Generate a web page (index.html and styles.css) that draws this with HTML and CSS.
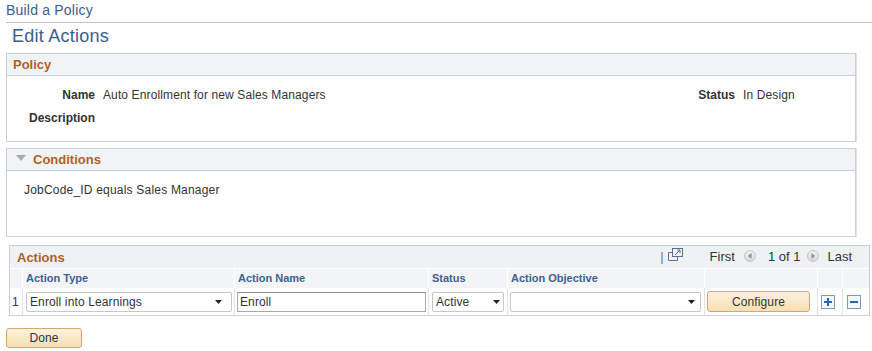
FILE: index.html
```html
<!DOCTYPE html>
<html lang="en">
<head>
<meta charset="utf-8">
<title>Edit Actions</title>
<link rel="stylesheet" href="styles.css">
</head>
<body>
<div class="crumb">Build a Policy</div>
<h1 class="title">Edit Actions</h1>

<section class="box">
  <div class="box-head">Policy</div>
  <div class="policy-body">
    <div class="lbl">Name</div>
    <div class="val">Auto Enrollment for new Sales Managers</div>
    <div class="lbl">Status</div>
    <div class="val">In Design</div>
    <div class="lbl">Description</div>
  </div>
</section>

<section class="box conditions">
  <div class="box-head">
    <svg class="tri" width="10" height="6" viewBox="0 0 10 6"><polygon points="0,0 10,0 5,6" fill="#ababab"/></svg>
    Conditions
  </div>
  <div class="cond-body">JobCode_ID equals Sales Manager</div>
</section>

<section class="grid">
  <div class="grid-head">
    <span class="grid-title">Actions</span>
    <div class="nav">
      <span class="sep">|</span>
      <svg class="popup" width="15" height="13" viewBox="0 0 15 13" fill="none" stroke="#5d7290" stroke-width="1">
        <rect x="4.5" y="0.5" width="10" height="8"/>
        <path d="M4.5 4.5H0.5V12.5H9.5V8.5"/>
        <path d="M7 7L12 2M9 2H12V5"/>
      </svg>
      <span class="nav-first">First</span>
      <svg class="circ prev" width="12" height="12" viewBox="0 0 12 12">
        <defs><linearGradient id="cg" x1="0" y1="0" x2="0" y2="1"><stop offset="0" stop-color="#f3f3f3"/><stop offset="1" stop-color="#d6d6d6"/></linearGradient></defs>
        <circle cx="6" cy="6" r="5.5" fill="url(#cg)" stroke="#c4c4c4"/>
        <polygon points="7.5,3 4,6 7.5,9" fill="#8e8e8e"/>
      </svg>
      <span class="nav-count">1 of 1</span>
      <svg class="circ next" width="12" height="12" viewBox="0 0 12 12">
        <circle cx="6" cy="6" r="5.5" fill="url(#cg)" stroke="#c4c4c4"/>
        <polygon points="4.5,3 8,6 4.5,9" fill="#8e8e8e"/>
      </svg>
      <span>Last</span>
    </div>
  </div>
  <div class="cols">
    <div class="hc"></div>
    <div class="hc">Action Type</div>
    <div class="hc">Action Name</div>
    <div class="hc">Status</div>
    <div class="hc">Action Objective</div>
    <div class="hc"></div>
    <div class="hc"></div>
    <div class="hc"></div>
  </div>
  <div class="data">
    <div class="dc num">1</div>
    <div class="dc c-type">
      <div class="select s-type"><span>Enroll into Learnings</span><svg class="caret" width="7" height="4" viewBox="0 0 7 4"><polygon points="0,0 7,0 3.5,4" fill="#222"/></svg></div>
    </div>
    <div class="dc c-name"><div class="input">Enroll</div></div>
    <div class="dc c-status">
      <div class="select s-status"><span>Active</span><svg class="caret" width="7" height="4" viewBox="0 0 7 4"><polygon points="0,0 7,0 3.5,4" fill="#222"/></svg></div>
    </div>
    <div class="dc c-obj">
      <div class="select s-obj"><span></span><svg class="caret" width="7" height="4" viewBox="0 0 7 4"><polygon points="0,0 7,0 3.5,4" fill="#222"/></svg></div>
    </div>
    <div class="dc c-cfg"><button class="btn cfg">Configure</button></div>
    <div class="dc c-add">
      <svg class="ibtn" width="14" height="14" viewBox="0 0 14 14"><rect x="0.5" y="0.5" width="13" height="13" fill="#f5f8fc" stroke="#7d9bc2"/><path d="M3 7H11M7 3V11" stroke="#2a66b3" stroke-width="2"/></svg>
    </div>
    <div class="dc c-del">
      <svg class="ibtn" width="14" height="14" viewBox="0 0 14 14"><rect x="0.5" y="0.5" width="13" height="13" fill="#f5f8fc" stroke="#7d9bc2"/><path d="M3 7H11" stroke="#2a66b3" stroke-width="2"/></svg>
    </div>
  </div>
</section>

<button class="btn done">Done</button>
</body>
</html>
```

FILE: styles.css
```css
body {
  margin: 0;
  font-family: "Liberation Sans", Arial, sans-serif;
  font-size: 12px;
  letter-spacing: 0.12px;
  color: #333;
  background: #fff;
}

.crumb {
  margin-left: 6px;
  padding: 2px 0 3px;
  font-size: 14px;
  line-height: 17px;
  letter-spacing: 0.2px;
  color: #3b5d8e;
  border-bottom: 1px solid #c2c2c2;
}

.title {
  margin: 2px 0 6px 12px;
  font-size: 18px;
  line-height: 22px;
  letter-spacing: 0.25px;
  font-weight: normal;
  color: #3b5d8e;
}

.box {
  margin-left: 6px;
  width: 850px;
  box-sizing: border-box;
  border: 1px solid #cbd0d5;
  box-shadow: 1px 0 0 #e2e5e8;
}

.conditions {
  margin-top: 6px;
}

.box-head {
  display: flex;
  align-items: center;
  height: 21px;
  line-height: 21px;
  padding-left: 6px;
  background: #f1f4f6;
  border-bottom: 1px solid #cbd0d5;
  font-size: 13px;
  font-weight: bold;
  letter-spacing: 0;
  color: #b45f1e;
}

.tri {
  margin: 0 7px 3px 3px;
}

.policy-body {
  display: grid;
  grid-template-columns: 96px 1fr auto 112px;
  row-gap: 7px;
  padding: 11px 0 15px;
  line-height: 16px;
}

.lbl {
  text-align: right;
  padding-right: 8px;
  font-weight: bold;
  letter-spacing: 0;
  color: #333;
}

.cond-body {
  height: 65px;
  box-sizing: border-box;
  padding: 11px 0 0 17px;
  line-height: 16px;
  letter-spacing: 0.2px;
}

.grid {
  margin: 8px 0 0 9px;
  width: 861px;
  box-sizing: border-box;
  border: 1px solid #cbd0d5;
}

.grid-head {
  display: flex;
  align-items: center;
  justify-content: space-between;
  height: 22px;
  padding-left: 7px;
  background: #eff2f4;
}

.grid-title {
  font-size: 13px;
  font-weight: bold;
  letter-spacing: 0;
  color: #b45f1e;
}

.nav {
  display: flex;
  align-items: center;
  padding-right: 17px;
  font-size: 13px;
  line-height: 22px;
  letter-spacing: 0;
  color: #333;
}

.sep {
  margin-right: 4px;
  color: #8d5c9f;
}

.popup {
  margin: 0 27px 5px 0;
}

.nav-first {
  margin-right: 9px;
}

.circ {
  margin-bottom: 3px;
}

.prev {
  margin-right: 12px;
}

.nav-count {
  margin-right: 7px;
}

.next {
  margin-right: 8px;
}

.cols,
.data {
  display: grid;
  grid-template-columns: 12px 212px 194px 79px 197px 113px 25px 27px;
}

.cols {
  height: 19px;
  border-top: 1px solid #fff;
  background: #f2f4f6;
}

.hc {
  box-sizing: border-box;
  padding-left: 3px;
  border-left: 1px solid #fff;
  font-size: 11px;
  font-weight: bold;
  letter-spacing: 0;
  line-height: 19px;
  color: #3f6190;
  white-space: nowrap;
  overflow: hidden;
}

.hc:first-child {
  border-left: 0;
}

.data {
  height: 27px;
  background: #fff;
}

.dc {
  display: flex;
  align-items: center;
  box-sizing: border-box;
  border-left: 1px solid #e0e3e6;
}

.dc.num {
  border-left: 0;
  padding-left: 2px;
}

.select {
  display: flex;
  align-items: center;
  justify-content: space-between;
  box-sizing: border-box;
  height: 20px;
  padding-left: 3px;
  border: 1px solid #c3c8cd;
  border-radius: 2px;
  background: #fff;
  color: #333;
}

.s-type {
  width: 206px;
  margin-left: 3px;
  padding-right: 9px;
}

.s-status {
  width: 72px;
  margin-left: 3px;
  padding-right: 3px;
}

.s-obj {
  width: 191px;
  margin-left: 2px;
  padding-right: 5px;
}

.input {
  box-sizing: border-box;
  width: 189px;
  height: 20px;
  margin-left: 2px;
  padding-left: 2px;
  border: 1px solid #a8a8a8;
  border-top-color: #8e8e8e;
  line-height: 18px;
  background: #fff;
}

.btn {
  box-sizing: border-box;
  border: 1px solid #d6a76c;
  border-radius: 3px;
  background: linear-gradient(#fdf2df, #f8deb1);
  font-family: "Liberation Sans", Arial, sans-serif;
  font-size: 12px;
  letter-spacing: 0.12px;
  color: #333;
  padding: 0;
}

.cfg {
  width: 103px;
  height: 21px;
  margin-left: 2px;
}

.c-add .ibtn {
  margin-left: 3px;
}

.c-del .ibtn {
  margin-left: 4px;
}

.done {
  display: block;
  width: 76px;
  height: 20px;
  margin: 12px 0 0 6px;
}
```
